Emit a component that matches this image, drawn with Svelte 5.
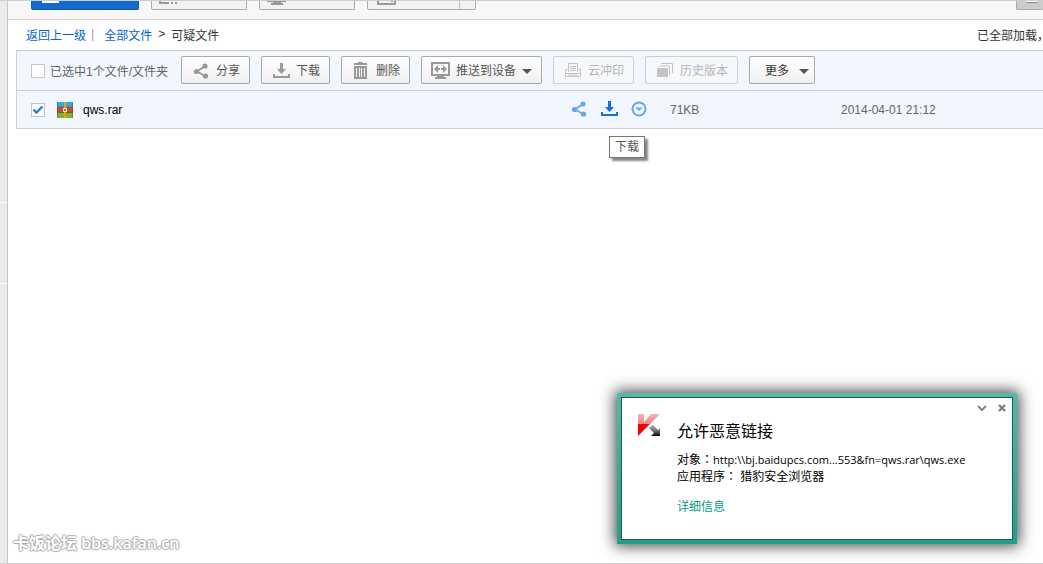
<script>
  let allSelected = $state(false);
  let fileSelected = $state(true);
  let showNotice = $state(true);

  const topButtons = ["upload", "folder", "device", "offline"];

  const actions = [
    { id: "share", label: "分享" },
    { id: "download", label: "下载" },
    { id: "remove", label: "删除" },
    { id: "push", label: "推送到设备", menu: true },
    { id: "print", label: "云冲印", disabled: true },
    { id: "history", label: "历史版本", disabled: true },
    { id: "more", label: "更多", menu: true }
  ];

  const file = { name: "qws.rar", size: "71KB", date: "2014-04-01 21:12" };
</script>

{#snippet icon(id)}
  {#if id === "share"}
    <svg width="16" height="16" viewBox="0 0 16 16" fill="currentColor">
      <path d="M12 3 4 8.500 12 13" fill="none" stroke="currentColor" stroke-width="1.800" />
      <circle cx="12" cy="3" r="2.600" />
      <circle cx="3.500" cy="8.500" r="2.600" />
      <circle cx="12.500" cy="13" r="2.600" />
    </svg>
  {:else if id === "download"}
    <svg width="18" height="16" viewBox="0 0 18 16" fill="currentColor">
      <path d="M8 0h3v6h3l-4.500 5L5 6h3zM1 11h2v2h13v-2h2v4H1z" />
    </svg>
  {:else if id === "remove"}
    <svg width="14" height="18" viewBox="0 0 14 18" fill="currentColor">
      <path d="M4 0h5v1h4v2H0V1h4z" />
      <path fill-rule="evenodd" d="M0 4h13v13H0zM2 6v9h1V6zM5 6v9h1V6zM7 6v9h1V6zM10 6v9h1V6z" />
    </svg>
  {:else if id === "push"}
    <svg width="20" height="18" viewBox="0 0 20 18" fill="currentColor">
      <path fill-rule="evenodd" d="M0 0h19v14H0zM2 2v10h15V2z" />
      <path d="M6 14h7v1h2v2H4v-2h2zM3 7l4-4v3h2v2H7v3zM16 7l-4-4v3h-2v2h2v3z" />
    </svg>
  {:else if id === "print"}
    <svg width="16" height="15" viewBox="0 0 16 15" fill="none" stroke="currentColor" stroke-width="1">
      <path d="M3.500 9V.500h9V9M5 3.500h6M5 5.500h6M5 7.500h6M2.500 6.500h-2v7h15v-7h-2M1 10.500h14M3 12h10" />
    </svg>
  {:else if id === "history"}
    <svg width="16" height="15" viewBox="0 0 16 15" fill="currentColor">
      <path d="M0 5h11v9H0z" />
      <path d="M2 3h10.500v9M4 .500h11.500V10" fill="none" stroke="currentColor" />
    </svg>
  {:else if id === "circle"}
    <svg width="16" height="16" viewBox="0 0 16 16" fill="currentColor">
      <circle cx="8" cy="8" r="6.500" fill="none" stroke="currentColor" stroke-width="2" />
      <path d="M4 6.500h8L8 10z" />
    </svg>
  {/if}
{/snippet}

<div class="page">
  <aside class="rail">
    <div class="rail-head"></div>
    <div class="rail-mid"></div>
  </aside>

  <main>
    <header class="topbar">
      {#each topButtons as name}
        <button class="top-btn {name}" aria-label={name}>
          {#if name === "upload"}
            <svg width="17" height="10" viewBox="0 0 17 10"><path d="M0 8h17v2H0z" fill="#fff" /></svg>
          {:else if name === "folder"}
            <svg width="20" height="10" viewBox="0 0 20 10"><path d="M1 4v4h9M12 8h2M16 8h2M12 5h1" fill="none" stroke="#999" stroke-width="2" /></svg>
          {:else if name === "device"}
            <svg width="20" height="10" viewBox="0 0 20 10"><path d="M0 5h19v2h-5v1h2v2H4V8h2V7H0z" fill="#999" /></svg>
          {:else}
            <svg width="20" height="10" viewBox="0 0 20 10"><path d="M1 0v9h17V0M14 6h2" fill="none" stroke="#999" stroke-width="2" /></svg>
          {/if}
        </button>
      {/each}
      <button class="top-btn view" aria-label="view">
        <svg width="12" height="10" viewBox="0 0 12 10"><path d="M0 5h12v3H0z" fill="#fff" /><path d="M0 8h12v1H0z" fill="#888" /></svg>
      </button>
    </header>

    <nav class="crumbs">
      <a href="#up">返回上一级</a>
      <span class="bar">|</span>
      <a href="#all">全部文件</a>
      <span class="sep">&gt;</span>
      <span>可疑文件</span>
      <span class="loaded">已全部加载，</span>
    </nav>

    <section class="list">
      <div class="toolbar">
        <label class="selected">
          <input type="checkbox" bind:checked={allSelected} />
          <span>已选中1个文件/文件夹</span>
        </label>
        {#each actions as action}
          <button class="action {action.id}" disabled={action.disabled}>
            {#if action.id !== "more"}
              <span class="glyph">{@render icon(action.id)}</span>
            {/if}
            <span>{action.label}</span>
            {#if action.menu}<i class="caret"></i>{/if}
          </button>
        {/each}
      </div>

      <div class="row">
        <label class="file">
          <input type="checkbox" bind:checked={fileSelected} />
          <svg width="16" height="16" viewBox="0 0 16 16">
            <path d="M0 0h16v5H0z" fill="#35aadc" />
            <path d="M0 5h16v6H0z" fill="#d1492e" />
            <path d="M0 11h16v5H0z" fill="#75b82f" />
            <path d="M0 5h16M0 10.500h16M.500 0v16M15.500 0v16" stroke="#3b4a38" stroke-opacity=".4" />
            <path d="M7 0h2v16H7z" fill="#e9a11c" />
            <path d="M6 6h4v4H6z" fill="#fff3cf" />
            <path d="M7 7h2v2H7z" fill="#c8681c" />
          </svg>
          <span>{file.name}</span>
        </label>
        <div class="tools">
          <button aria-label="分享">{@render icon("share")}</button>
          <button class="current" aria-label="下载">
            {@render icon("download")}
            <span class="tip" role="tooltip">下载</span>
          </button>
          <button aria-label="更多">{@render icon("circle")}</button>
        </div>
        <span class="size">{file.size}</span>
        <span class="date">{file.date}</span>
      </div>
    </section>
  </main>

  <div class="watermark">卡饭论坛 bbs.kafan.cn</div>

  {#if showNotice}
    <div class="notice">
      <div class="notice-body">
        <div class="notice-controls">
          <button aria-label="收起">
            <svg width="10" height="10" viewBox="0 0 10 10"><path d="M1 3l4 4 4-4" fill="none" stroke="#888" stroke-width="2" /></svg>
          </button>
          <button aria-label="关闭" onclick={() => (showNotice = false)}>
            <svg width="10" height="10" viewBox="0 0 10 10"><path d="M2 2l6 6M8 2L2 8" fill="none" stroke="#808080" stroke-width="2.400" /></svg>
          </button>
        </div>
        <svg class="logo" width="24" height="24" viewBox="0 0 24 24">
          <defs>
            <linearGradient id="arrow" x1="0" y1="0" x2="0" y2="1">
              <stop offset="0" stop-color="#aaa" />
              <stop offset=".5" stop-color="#777" />
              <stop offset="1" stop-color="#000" />
            </linearGradient>
            <linearGradient id="tint" x1="0" y1="0" x2="0" y2="1">
              <stop offset="0" stop-color="#f4b4b3" />
              <stop offset="1" stop-color="#f08080" />
            </linearGradient>
          </defs>
          <path d="M1 1h6v8l7-8h9L13 11H1z" fill="url(#tint)" />
          <path d="M1 11h12L1 23z" fill="#e50b0b" />
          <path d="M12 15l4-3 5 5 2-2v8h-9l3-3z" fill="url(#arrow)" />
        </svg>
        <div class="notice-text">
          <h2>允许恶意链接</h2>
          <p>对象<span class="colon">：</span><span class="address">http:\\bj.baidupcs.com...553&amp;fn=qws.rar\qws.exe</span></p>
          <p>应用程序<span class="colon">：</span> 猎豹安全浏览器</p>
          <a href="#detail">详细信息</a>
        </div>
      </div>
    </div>
  {/if}
</div>

<style>
  :global(body) {
    background: #fff;
    font-family: "Liberation Sans", "Noto Sans CJK SC", sans-serif;
    font-size: 12px;
    color: #333;
  }

  * {
    box-sizing: border-box;
  }

  button {
    font: inherit;
    padding: 0;
    border: 0;
    background: none;
    color: inherit;
  }

  a {
    color: #06c;
    text-decoration: none;
  }

  svg {
    display: block;
    flex: none;
  }

  .page {
    position: relative;
    display: flex;
    min-height: 100vh;
    border-top: 1px solid #c4cee2;
    border-bottom: 1px solid #ccc;
    overflow: hidden;
  }

  .rail {
    width: 8px;
    flex: none;
    background: #ebebeb;
    border-right: 1px solid #c6c6c6;
  }

  .rail-head {
    height: 202px;
    border-bottom: 1px solid #fff;
  }

  .rail-mid {
    height: 81px;
    border-bottom: 1px solid #fff;
  }

  main {
    flex: 1;
    min-width: 0;
  }

  .topbar {
    display: flex;
    gap: 12px;
    height: 19px;
    padding-left: 23px;
    background: #f7f7f7;
    border-bottom: 1px solid #d2d2d2;
  }

  .top-btn {
    display: flex;
    align-items: flex-end;
    width: 96px;
    height: 9px;
    padding: 0 7px 4px;
    border: 1px solid #aaa;
    border-top: 0;
    border-radius: 0 0 2px 2px;
    background: #f2f2f2;
    overflow: hidden;
  }

  .upload {
    width: 108px;
    padding: 0 10px 6px;
    background: #1469c9;
    border-color: #0d5ab3;
  }

  .offline {
    width: 109px;
    padding-left: 9px;
    background: linear-gradient(90deg, #f2f2f2 91px, #bbb 91px, #bbb 92px, #f2f2f2 92px);
  }

  .view {
    width: 27px;
    margin-left: auto;
    padding: 0 9px 5px;
    background: #ccc;
    border-right: 0;
  }

  .crumbs {
    display: flex;
    align-items: center;
    height: 30px;
    padding: 0 0 2px 18px;
    overflow: hidden;
    white-space: nowrap;
  }

  .bar {
    margin: 0 10px 0 5px;
    color: #999;
  }

  .sep {
    margin: 0 6px;
  }

  .loaded {
    margin: 0 -6px 0 auto;
  }

  .list {
    margin-left: 8px;
    background: #f2f6ff;
    border-left: 1px solid #d2d2d2;
  }

  .toolbar {
    display: flex;
    align-items: center;
    gap: 11px;
    height: 41px;
    padding: 0 14px 2px;
    border-top: 1px solid #ccc;
    border-bottom: 1px solid #ccc;
    white-space: nowrap;
  }

  .selected {
    display: flex;
    align-items: center;
    gap: 5px;
    width: 139px;
    padding-top: 2px;
    color: #666;
  }

  input {
    appearance: none;
    flex: none;
    width: 14px;
    height: 14px;
    margin: 0;
    border: 1px solid #c5c5c5;
    background: #fff;
  }

  input:checked {
    background: #fff url("data:image/svg+xml,%3Csvg xmlns='http://www.w3.org/2000/svg' viewBox='0 0 12 12'%3E%3Cpath d='M1.500 5.500l3 3 6-6' fill='none' stroke='%23277edc' stroke-width='2.400'/%3E%3C/svg%3E");
  }

  .action {
    display: flex;
    align-items: center;
    height: 28px;
    padding: 0 9px;
    border: 1px solid #aaa;
    border-radius: 2px;
    background: linear-gradient(#fff, #f0f0f0);
    color: #555;
  }

  .action:disabled {
    border-color: #ccd;
    background: #f6f8fc;
    color: #b3b5ba;
  }

  .glyph {
    display: flex;
    justify-content: center;
    width: 20px;
    margin-right: 5px;
    padding-top: 2px;
    color: #999;
  }

  .action:disabled .glyph {
    color: #c2c3c8;
  }

  .more {
    padding-left: 15px;
    color: #333;
  }

  .caret {
    margin: 3px 0 0 6px;
    border: 5px solid transparent;
    border-top-color: #555;
    border-bottom: 0;
  }

  .more .caret {
    margin: 3px -4px 0 10px;
  }

  .row {
    display: grid;
    grid-template-columns: minmax(0, 552px) 87px 171px auto;
    align-items: center;
    height: 38px;
    padding-left: 14px;
    border-bottom: 1px solid #d2d2d2;
    color: #666;
  }

  .file {
    display: flex;
    align-items: center;
    color: #000;
  }

  .file svg {
    margin: 0 10px 0 12px;
  }

  .row .tools {
    margin-left: -12px;
  }

  .tools {
    display: flex;
    align-items: center;
    gap: 13px;
    padding-bottom: 2px;
    color: #69a6e8;
  }

  .current {
    position: relative;
    color: #1470dc;
  }

  .tip {
    position: absolute;
    top: 35px;
    left: 9px;
    padding: 0 5px;
    border: 1px solid #767676;
    background: #fff;
    box-shadow: 3px 3px 2px #888;
    color: #575757;
    line-height: 20px;
    white-space: nowrap;
  }

  .watermark {
    position: absolute;
    left: 13px;
    bottom: 8px;
    color: #fff;
    font-family: "Open Sans", "Noto Sans CJK SC", sans-serif;
    font-size: 16px;
    font-weight: 600;
    line-height: 24px;
    text-shadow: 1px 0 1px #aaa, -1px 0 1px #aaa, 0 1px 1px #aaa, 0 -1px 1px #aaa;
  }

  .notice {
    position: absolute;
    right: 26px;
    bottom: 19px;
    width: 400px;
    padding: 4px;
    background: linear-gradient(#55b8a8, #229c89);
    box-shadow: 0 0 14px 2px #444;
    font-family: "Open Sans", "Noto Sans CJK SC", sans-serif;
    color: #000;
  }

  .notice-body {
    position: relative;
    display: flex;
    gap: 16px;
    min-height: 143px;
    padding: 15px;
    border: 1px solid #24594f;
    background: #fff;
  }

  .notice-controls {
    position: absolute;
    top: 5px;
    right: 5px;
    display: flex;
    gap: 10px;
  }

  .notice-text {
    padding-top: 6px;
    white-space: nowrap;
  }

  h2 {
    margin: 0 0 8px;
    font-size: 16px;
    font-weight: 400;
    line-height: 24px;
  }

  p {
    margin: 0;
    line-height: 16px;
  }

  .colon {
    font-family: "Noto Sans CJK TC", sans-serif;
  }

  .address {
    font-size: 11px;
  }

  .notice a {
    display: block;
    margin-top: 14px;
    color: #0a9b83;
    line-height: 16px;
  }
</style>
